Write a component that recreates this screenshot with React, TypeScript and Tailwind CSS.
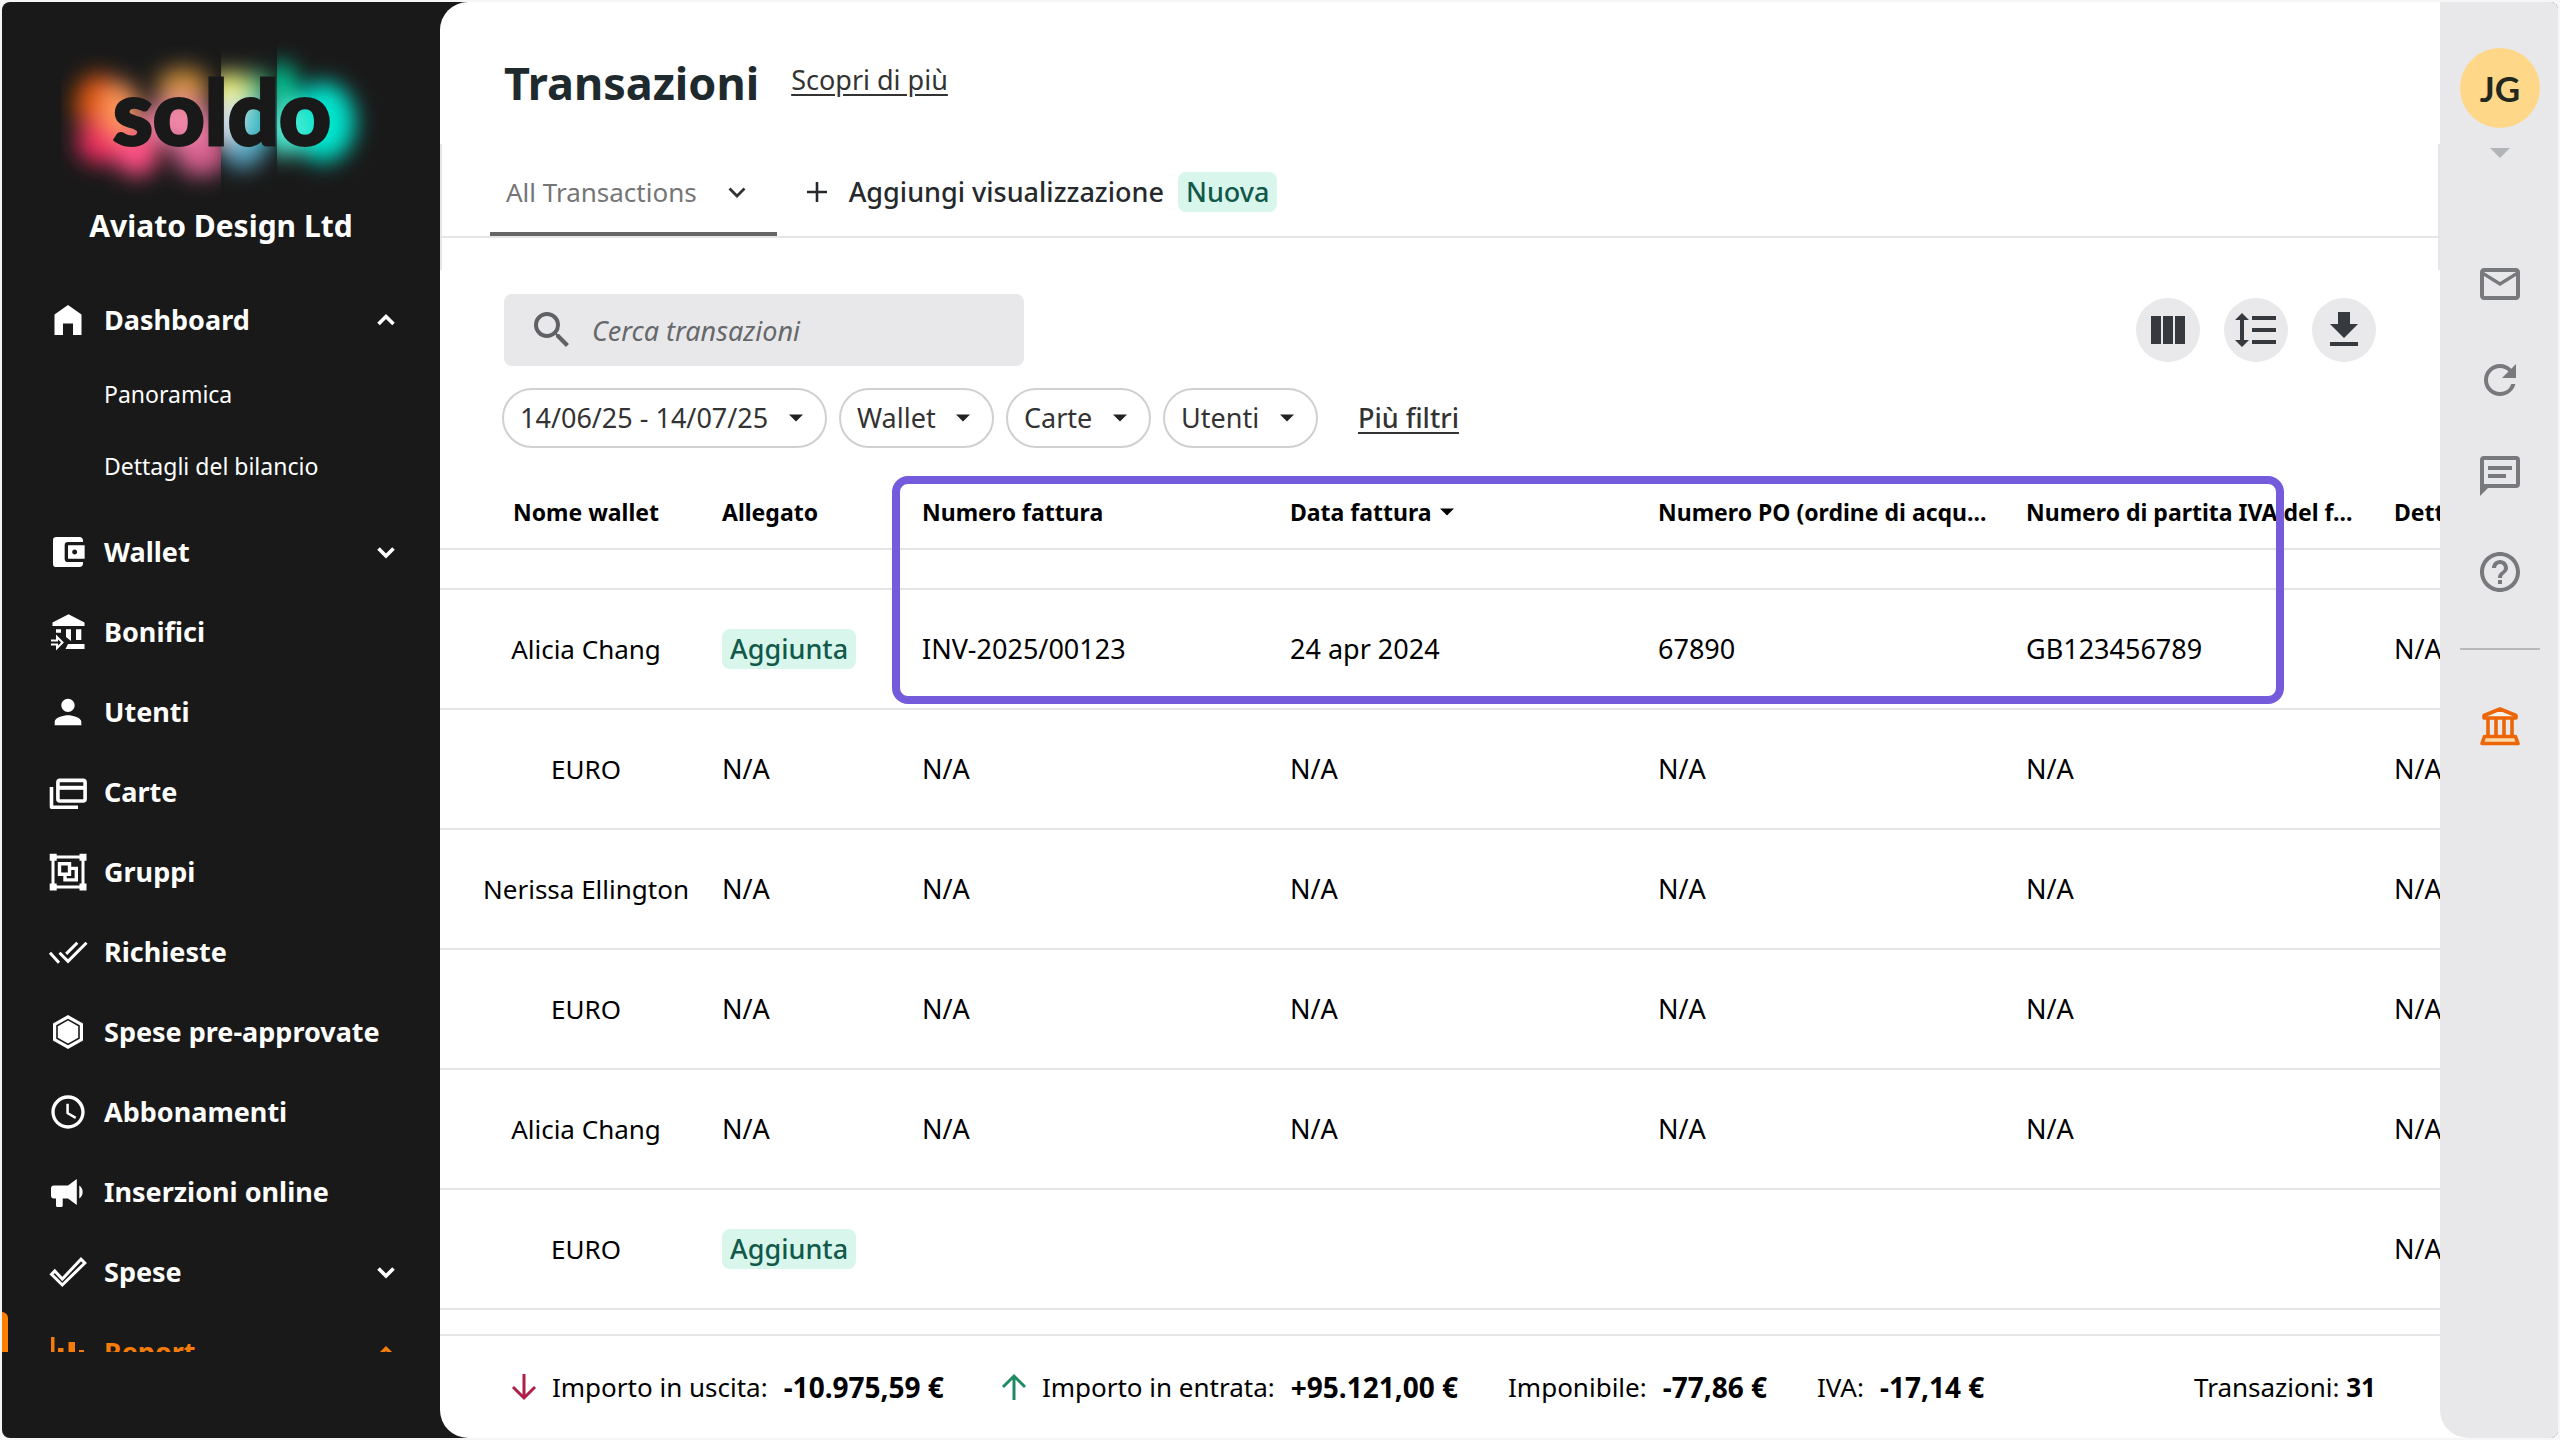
import type { ReactNode } from 'react';
import {
  MdAccessTime,
  MdAccountBalanceWallet,
  MdFormatLineSpacing,
  MdHelpOutline,
  MdMailOutline,
  MdPerson,
  MdRefresh,
  MdSearch,
} from 'react-icons/md';

function Logo() {
  return (
    <svg viewBox="0 0 320 160" className="h-40 w-80" role="img" aria-label="soldo">
      <defs>
        <filter id="glow" x="-50%" y="-50%" width="200%" height="200%">
          <feGaussianBlur stdDeviation="11" />
        </filter>
        <clipPath id="left">
          <rect x="0" y="0" width="160" height="160" />
        </clipPath>
        <clipPath id="middle">
          <rect x="160" y="0" width="56" height="160" />
        </clipPath>
        <clipPath id="right">
          <rect x="216" y="0" width="104" height="160" />
        </clipPath>
      </defs>
      <g clipPath="url(#left)">
        <g filter="url(#glow)">
          <ellipse cx="38" cy="62" rx="24" ry="30" fill="#e0560c" />
          <ellipse cx="40" cy="100" rx="24" ry="22" fill="#ee2f60" />
          <ellipse cx="76" cy="110" rx="22" ry="24" fill="#ff4f86" />
          <ellipse cx="60" cy="68" rx="18" ry="28" fill="#ff9a5c" />
          <ellipse cx="122" cy="46" rx="26" ry="20" fill="#d08f3c" />
          <ellipse cx="140" cy="108" rx="28" ry="26" fill="#d65f8e" />
          <ellipse cx="118" cy="80" rx="36" ry="22" fill="#f286a8" />
        </g>
      </g>
      <g clipPath="url(#middle)">
        <g filter="url(#glow)">
          <ellipse cx="194" cy="46" rx="20" ry="16" fill="#2fb27a" />
          <ellipse cx="166" cy="50" rx="22" ry="20" fill="#eef27a" />
          <ellipse cx="168" cy="82" rx="22" ry="24" fill="#e3e6f2" />
          <ellipse cx="196" cy="82" rx="20" ry="26" fill="#3fc6cf" />
          <ellipse cx="182" cy="110" rx="20" ry="16" fill="#5aa9c8" />
        </g>
      </g>
      <g clipPath="url(#right)">
        <g filter="url(#glow)">
          <ellipse cx="220" cy="46" rx="16" ry="26" fill="#00c795" />
          <ellipse cx="262" cy="80" rx="32" ry="40" fill="#00e6cf" />
          <ellipse cx="222" cy="88" rx="20" ry="26" fill="#4ff0d6" />
        </g>
      </g>
      <text
        x="161"
        y="103"
        textAnchor="middle"
        fill="#191919"
        stroke="#191919"
        strokeWidth="3"
        className="font-['Lato',sans-serif] text-[90px] font-black"
      >
        soldo
      </text>
    </svg>
  );
}

function Icon({ children }: { children: ReactNode }) {
  return (
    <svg viewBox="0 0 40 40" className="size-10 shrink-0" fill="currentColor" aria-hidden="true">
      {children}
    </svg>
  );
}

const homeIcon = (
  <Icon>
    <path d="M20 5 33.5 14.5V35H25V23.5H15V35H6.5V14.5z" />
  </Icon>
);

const transferIcon = (
  <Icon>
    <path d="M20.5 2.3 36.5 10.5V14H4.5V10.5zM18 17.3h5V29l-5-4zM28 17.3h5.3V28H28zM8 17.3h5v3.4H8zM20 32h16.5v5H17.5z" />
    <path d="M3 28.5H9V25L14.5 30.5 9 36V32.5H3" fill="none" stroke="currentColor" strokeWidth="2" />
  </Icon>
);

const cardsIcon = (
  <Icon>
    <rect x="9.9" y="8.4" width="27.2" height="20.6" rx="2" fill="none" stroke="currentColor" strokeWidth="3.6" />
    <path d="M10 13.8h27v4H10z" />
    <path d="M3.5 15V35.2H30" fill="none" stroke="currentColor" strokeWidth="3.6" strokeLinejoin="round" />
  </Icon>
);

const groupsIcon = (
  <Icon>
    <path d="M5 5H35V35H5z" fill="none" stroke="currentColor" strokeWidth="3" />
    <path d="M1.7 1.7h7v7h-7zM31.5 1.7h7v7h-7zM1.7 31.5h7v7h-7zM31.5 31.5h7v7h-7z" />
    <path d="M11.5 11.8h10v10.5h-10zM21.5 16.4H28.3V27.9H17V22" fill="none" stroke="currentColor" strokeWidth="3.4" />
  </Icon>
);

const requestsIcon = (
  <Icon>
    <path
      d="M2 20.7 11 30.7M11.5 20.8 20 29.3 38.5 10.8M29.3 10.8 18.2 21.9"
      fill="none"
      stroke="currentColor"
      strokeWidth="3"
    />
  </Icon>
);

const hexagonIcon = (
  <Icon>
    <path d="M20 3 35 11.5V28.5L20 37 5 28.5V11.5z" />
    <path d="M20 7.6 31 13.8V26.2L20 32.4 9 26.2V13.8z" fill="none" stroke="#191919" strokeWidth="1.6" />
  </Icon>
);

const megaphoneIcon = (
  <Icon>
    <path d="M6 13.5H20L28.8 7V33L20 26.5H14.7V33.5a1.5 1.5 0 0 1-1.5 1.5H9.5a1.5 1.5 0 0 1-1.5-1.5V26.5H6a3 3 0 0 1-3-3V16.5a3 3 0 0 1 3-3zM31.3 13.5a8 8 0 0 1 0 13z" />
  </Icon>
);

const checkIcon = (
  <Icon>
    <path
      d="M3.5 22.3 6.8 19 14.3 27 33 7.2 36.8 11 14.3 33z"
      fill="none"
      stroke="currentColor"
      strokeWidth="3"
    />
  </Icon>
);

const reportIcon = (
  <Icon>
    <path d="M3 5h3.5v28.5H37V37H3zM10 16h5.5v14H10zM20.5 10H27v20h-6.5zM31 18h5v12h-5z" />
  </Icon>
);

function Chevron({ up = false, thin = false }: { up?: boolean; thin?: boolean }) {
  return (
    <svg
      viewBox="0 0 24 24"
      className="size-6 shrink-0"
      fill="none"
      stroke="currentColor"
      strokeWidth={thin ? 2.8 : 3.6}
      aria-hidden="true"
    >
      <path d={up ? 'M4.5 16 12 8.5 19.5 16' : 'M4.5 8.5 12 16 19.5 8.5'} />
    </svg>
  );
}

function Caret({ className }: { className: string }) {
  return (
    <svg viewBox="0 0 20 10" className={className} fill="currentColor" aria-hidden="true">
      <path d="M0 0H20L10 10z" />
    </svg>
  );
}

type NavEntry = { label: string; icon: ReactNode; expandable?: boolean };

const nav: NavEntry[] = [
  { label: 'Wallet', icon: <MdAccountBalanceWallet className="size-10 shrink-0" />, expandable: true },
  { label: 'Bonifici', icon: transferIcon },
  { label: 'Utenti', icon: <MdPerson className="size-10 shrink-0" /> },
  { label: 'Carte', icon: cardsIcon },
  { label: 'Gruppi', icon: groupsIcon },
  { label: 'Richieste', icon: requestsIcon },
  { label: 'Spese pre-approvate', icon: hexagonIcon },
  { label: 'Abbonamenti', icon: <MdAccessTime className="size-10 shrink-0" /> },
  { label: 'Inserzioni online', icon: megaphoneIcon },
  { label: 'Spese', icon: checkIcon, expandable: true },
];

function NavRow({ label, icon, expandable, open, active }: NavEntry & { open?: boolean; active?: boolean }) {
  const row = 'relative flex h-20 w-full items-center gap-4 pr-[42px] pl-[46px] text-left text-[27px] font-bold';
  const content = (
    <>
      {icon}
      <span className="flex-1 whitespace-nowrap">{label}</span>
      {expandable && <Chevron up={open} />}
    </>
  );

  if (!expandable) {
    return (
      <a href="#" className={row}>
        {content}
      </a>
    );
  }
  return (
    <button type="button" aria-expanded={!!open} className={active ? `${row} text-[#f57c0a]` : row}>
      {active && <span className="absolute top-0 left-0 h-full w-1.5 rounded-r-md bg-[#ff8000]" />}
      {content}
    </button>
  );
}

function Sidebar() {
  return (
    <aside className="flex w-[438px] shrink-0 flex-col text-white">
      <div className="flex h-[278px] flex-col items-center pt-10">
        <Logo />
        <p className="mt-1 text-[30px] leading-10 font-bold">Aviato Design Ltd</p>
      </div>
      <nav className="min-h-0 flex-1 overflow-hidden">
        <NavRow label="Dashboard" icon={homeIcon} expandable open />
        <ul className="-mt-0.5 mb-2.5 text-[23px]">
          <li>
            <a href="#" className="flex h-[72px] items-center pl-[102px]">
              Panoramica
            </a>
          </li>
          <li>
            <a href="#" className="flex h-[72px] items-center pl-[102px]">
              Dettagli del bilancio
            </a>
          </li>
        </ul>
        {nav.map((entry) => (
          <NavRow key={entry.label} {...entry} />
        ))}
        <NavRow label="Report" icon={reportIcon} expandable open active />
      </nav>
      <div className="h-[86px] shrink-0" />
    </aside>
  );
}

function Tag({ children }: { children: ReactNode }) {
  return (
    <span className="inline-block rounded-lg bg-[#d9f6ec] px-2 text-[27px] leading-10 font-medium text-[#11594a]">
      {children}
    </span>
  );
}

function Filter({ label }: { label: string }) {
  return (
    <div className="relative text-[#333]">
      <select
        aria-label={label}
        className="h-[60px] appearance-none rounded-full border-2 border-[#d0d0d2] bg-white pr-14 pl-4 text-[27px]"
      >
        <option>{label}</option>
      </select>
      <Caret className="pointer-events-none absolute top-[26px] right-6 h-2 w-3.5 text-[#222]" />
    </div>
  );
}

function RoundButton({ label, children }: { label: string; children: ReactNode }) {
  return (
    <button
      type="button"
      aria-label={label}
      className="flex size-16 items-center justify-center rounded-full bg-[#e9e9eb] text-[#363a3f]"
    >
      {children}
    </button>
  );
}

function Toolbar() {
  return (
    <div className="flex items-center justify-between pr-16 pl-16">
      <div className="relative">
        <MdSearch className="absolute top-3 left-6 size-12 text-[#5f6164]" />
        <input
          type="search"
          aria-label="Cerca transazioni"
          placeholder="Cerca transazioni"
          className="h-[72px] w-[520px] rounded-lg bg-[#e8e8ea] pl-[88px] text-[27px] italic outline-none placeholder:text-[#66686b]"
        />
      </div>
      <div className="flex gap-6">
        <RoundButton label="Colonne">
          <svg viewBox="0 0 48 48" className="size-12" fill="currentColor">
            <path d="M7 10h10v28H7zM19 10h10v28H19zM31 10h10v28H31z" />
          </svg>
        </RoundButton>
        <RoundButton label="Interlinea">
          <MdFormatLineSpacing className="size-12" />
        </RoundButton>
        <RoundButton label="Scarica">
          <svg viewBox="0 0 24 24" className="size-12" fill="currentColor">
            <path d="M19 9h-4V3H9v6H5l7 7zM5 18v2h14v-2z" />
          </svg>
        </RoundButton>
      </div>
    </div>
  );
}

const columns = [
  'Nome wallet',
  'Allegato',
  'Numero fattura',
  'Data fattura',
  'Numero PO (ordine di acqu...',
  'Numero di partita IVA del f...',
  'Dettagli',
];

const rows = [
  ['Alicia Chang', 'Aggiunta', 'INV-2025/00123', '24 apr 2024', '67890', 'GB123456789', 'N/A'],
  ['EURO', 'N/A', 'N/A', 'N/A', 'N/A', 'N/A', 'N/A'],
  ['Nerissa Ellington', 'N/A', 'N/A', 'N/A', 'N/A', 'N/A', 'N/A'],
  ['EURO', 'N/A', 'N/A', 'N/A', 'N/A', 'N/A', 'N/A'],
  ['Alicia Chang', 'N/A', 'N/A', 'N/A', 'N/A', 'N/A', 'N/A'],
  ['EURO', 'Aggiunta', '', '', '', '', 'N/A'],
];

function TransactionsTable() {
  return (
    <div className="relative min-h-0 flex-1 overflow-hidden">
      <table className="w-[2306px] table-fixed border-separate border-spacing-0 text-left text-black">
        <colgroup>
          <col className="w-[266px]" />
          <col className="w-[200px]" />
          <col className="w-[368px]" />
          <col className="w-[368px]" />
          <col className="w-[368px]" />
          <col className="w-[368px]" />
          <col className="w-[368px]" />
        </colgroup>
        <thead>
          <tr className="h-[74px] text-[23px]">
            {columns.map((name, i) => (
              <th
                key={name}
                className={`border-b-2 border-[#e6e6e8] font-bold whitespace-nowrap ${i === 0 ? 'pr-4 pl-[42px] text-center' : 'px-4'}`}
              >
                {name}
                {name === 'Data fattura' && <Caret className="mb-1 ml-2 inline h-2 w-3.5" />}
              </th>
            ))}
          </tr>
        </thead>
        <tbody>
          <tr className="h-10">
            <td colSpan={7} className="border-b-2 border-[#e6e6e8]" />
          </tr>
          {rows.map((cells, r) => (
            <tr key={r} className="h-[120px] text-[27px]">
              {cells.map((cell, i) => (
                <td
                  key={i}
                  className={`border-b-2 border-[#e6e6e8] whitespace-nowrap ${i === 0 ? 'pr-0 pl-[26px] text-center text-[26px]' : 'px-4'}`}
                >
                  {cell === 'Aggiunta' ? <Tag>{cell}</Tag> : cell}
                </td>
              ))}
            </tr>
          ))}
        </tbody>
      </table>
      {/* highlight around the invoice columns */}
      <div className="pointer-events-none absolute top-0 left-[452px] h-[228px] w-[1392px] rounded-2xl border-8 border-[#735bdb]" />
    </div>
  );
}

function Arrow({ up = false }: { up?: boolean }) {
  return (
    <svg
      viewBox="0 0 28 28"
      className={`mr-3.5 ml-1.5 size-7 ${up ? 'text-[#1f8a63]' : 'text-[#b01f45]'}`}
      fill="none"
      stroke="currentColor"
      strokeWidth="3"
      aria-hidden="true"
    >
      <path d={up ? 'M14 27V3M3 14 14 3 25 14' : 'M14 1V25M3 14 14 25 25 14'} />
    </svg>
  );
}

function Total({ label, value, icon }: { label: string; value: string; icon?: ReactNode }) {
  return (
    <div className="flex items-center whitespace-nowrap">
      {icon}
      <span>{label}</span>
      <strong className="ml-4 text-[28px]">{value}</strong>
    </div>
  );
}

function Rail() {
  return (
    <aside className="flex w-[118px] shrink-0 flex-col items-center rounded-r-lg rounded-bl-[28px] bg-[#e8e8ea] pt-[46px] pl-0.5 text-[#77797c]">
      <button type="button" className="flex flex-col items-center">
        <span className="flex size-20 items-center justify-center rounded-full bg-[#ffd788] font-['Lato',sans-serif] text-[35px] font-bold text-[#22271f]">
          JG
        </span>
        <Caret className="mt-5 h-2.5 w-5 text-[#b2b5b7]" />
      </button>
      <div className="mt-[102px] flex flex-col items-center gap-12">
        <button type="button" aria-label="Messaggi">
          <MdMailOutline className="size-12" />
        </button>
        <button type="button" aria-label="Aggiorna">
          <MdRefresh className="size-12" />
        </button>
        <button type="button" aria-label="Chat">
          <svg viewBox="0 0 24 24" className="size-12" fill="currentColor">
            <path d="M20 2H4a2 2 0 0 0-2 2v18l4-4h14a2 2 0 0 0 2-2V4a2 2 0 0 0-2-2zm0 14H4V4h16zM6 7h12v2H6zM6 11h9v2H6z" />
          </svg>
        </button>
        <button type="button" aria-label="Aiuto">
          <MdHelpOutline className="size-12" />
        </button>
      </div>
      <hr className="mt-[52px] w-20 border-t-2 border-[#b7b8ba]" />
      <button type="button" aria-label="Banca" className="mt-14 text-[#ec6608]">
        <svg viewBox="0 0 40 40" className="size-10" fill="none" stroke="currentColor" strokeWidth="3.6">
          <path d="M20 3 36 9.5V12H4V9.5z" fill="#fdf3ea" strokeLinejoin="round" />
          <path d="M4.5 30.5h31L38 37.5H2z" fill="#fbd9a8" strokeLinejoin="round" />
          <path d="M8 13v16M16 13v16M24 13v16M32 13v16" />
        </svg>
      </button>
    </aside>
  );
}

export default function App() {
  return (
    <div className="h-screen bg-[#f6f6f6] p-0.5 font-['Noto_Sans',sans-serif]">
      <div className="flex h-full overflow-hidden rounded-lg bg-[#191919]">
        <Sidebar />
        <div className="flex min-w-0 flex-1 overflow-hidden rounded-l-[28px] bg-white">
          <main className="flex min-w-0 flex-1 flex-col text-[26px]">
            <header className="flex h-[142px] shrink-0 gap-8 pt-12 pl-16">
              <h1 className="text-[45px] leading-[66px] font-bold text-[#1f2a2e]">Transazioni</h1>
              <a href="#" className="pt-2.5 text-[27px] leading-10 text-[#333] underline underline-offset-4">
                Scopri di più
              </a>
            </header>

            <div className="flex h-[94px] shrink-0 items-end border-x-2 border-b-2 border-[#e6e6e8] pl-12">
              <button
                type="button"
                aria-haspopup="menu"
                className="flex h-full items-center gap-7 border-b-4 border-[#666] pt-2 pr-7 pl-4 text-[#757575]"
              >
                All Transactions
                <span className="text-[#333]">
                  <Chevron thin />
                </span>
              </button>
              <button
                type="button"
                className="ml-7 flex h-full items-center gap-3.5 pt-1 text-[27px] font-medium text-[#26292c]"
              >
                <svg viewBox="0 0 24 24" className="mr-1.5 size-6" fill="none" stroke="currentColor" strokeWidth="2.6">
                  <path d="M12 2v20M2 12h20" />
                </svg>
                Aggiungi visualizzazione
                <Tag>Nuova</Tag>
              </button>
            </div>
            <div className="h-8 shrink-0 border-x-2 border-[#e6e6e8]" />

            <section className="flex min-h-0 flex-1 flex-col pt-6">
              <Toolbar />
              <div className="mt-[22px] mb-7 flex items-center gap-3 pl-[62px]">
                <Filter label="14/06/25 - 14/07/25" />
                <Filter label="Wallet" />
                <Filter label="Carte" />
                <Filter label="Utenti" />
                <a href="#" className="ml-7 text-[27px] font-medium text-[#333] underline underline-offset-4">
                  Più filtri
                </a>
              </div>
              <TransactionsTable />
            </section>

            <footer className="flex h-[104px] shrink-0 items-center gap-[50px] border-t-2 border-[#e6e6e8] px-16 text-black">
              <Total label="Importo in uscita:" value="-10.975,59 €" icon={<Arrow />} />
              <Total label="Importo in entrata:" value="+95.121,00 €" icon={<Arrow up />} />
              <Total label="Imponibile:" value="-77,86 €" />
              <Total label="IVA:" value="-17,14 €" />
              <p className="ml-auto whitespace-nowrap">
                Transazioni: <strong>31</strong>
              </p>
            </footer>
          </main>
          <Rail />
        </div>
      </div>
    </div>
  );
}
